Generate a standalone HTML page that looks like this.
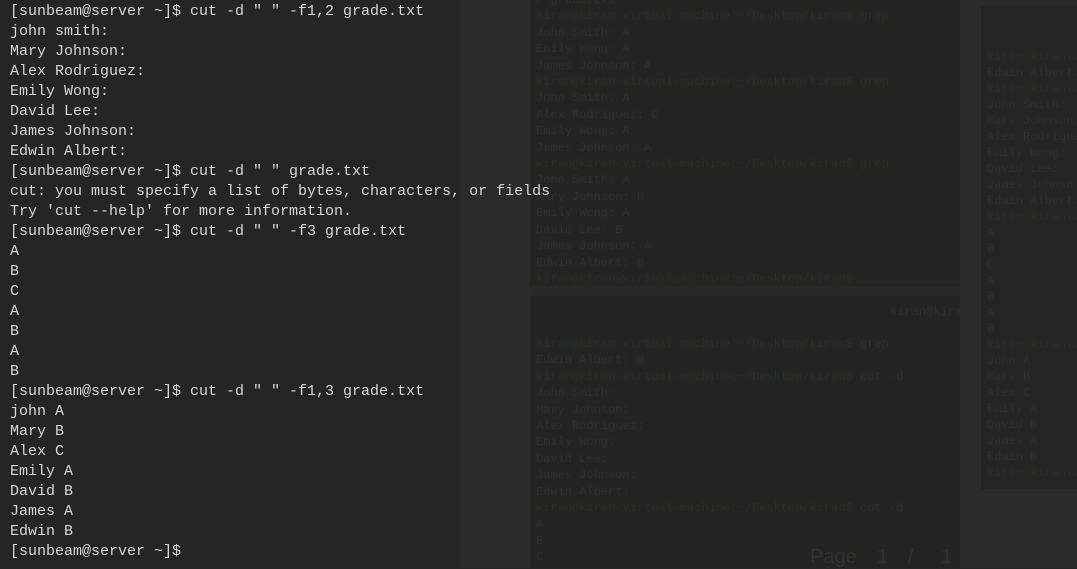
<!DOCTYPE html>
<html><head><style>
html,body{margin:0;padding:0;width:1077px;height:568px;overflow:hidden;background:#252525;}
.bg{position:absolute;top:0;bottom:0}
pre{margin:0;font-family:"Liberation Mono",monospace;font-size:15px;line-height:20px;white-space:pre;}
#t{position:absolute;left:10px;top:2px;color:#d6d6d6;z-index:5}
.f{position:absolute;color:#2d2f2a;font-size:12px;line-height:16.4px;z-index:2}
.k{color:#263024}
</style></head><body>
<div class="bg" style="left:0;width:460px;background:#252525"></div>
<div class="bg" style="left:460px;width:70px;background:#2b2b29"></div>
<div class="bg" style="left:530px;width:430px;background:#242520"></div>
<div class="bg" style="left:960px;width:117px;background:#2b2c28"></div>
<div style="position:absolute;left:981px;top:6px;width:96px;height:483px;background:#252621"></div>
<div style="position:absolute;left:530px;top:286px;width:430px;height:10px;background:#282925"></div>
<pre class="f" style="left:536px;top:-8px">/ grade.txt
<span class="k">kiran@kiran-virtual-machine:~/Desktop/kiran$ grep</span>
John Smith: A
Emily Wong: A
James Johnson: A
<span class="k">kiran@kiran-virtual-machine:~/Desktop/kiran$ grep</span>
John Smith: A
Alex Rodriguez: C
Emily Wong: A
James Johnson: A
<span class="k">kiran@kiran-virtual-machine:~/Desktop/kiran$ grep</span>
John Smith: A
Mary Johnson: B
Emily Wong: A
David Lee: B
James Johnson: A
Edwin Albert: B
<span class="k">kiran@kiran-virtual-machine:~/Desktop/kiran$</span></pre>
<pre class="f" style="left:890px;top:304px">kiran@kiran-</pre>
<pre class="f" style="left:536px;top:336px"><span class="k">kiran@kiran-virtual-machine:~/Desktop/kiran</span>$ grep
Edwin Albert: B
<span class="k">kiran@kiran-virtual-machine:~/Desktop/kiran</span>$ cut -d
John Smith:
Mary Johnson:
Alex Rodriguez:
Emily Wong:
David Lee:
James Johnson:
Edwin Albert:
<span class="k">kiran@kiran-virtual-machine:~/Desktop/kiran</span>$ cut -d
A
B
C</pre>
<pre class="f" style="left:987px;top:49px;line-height:16px"><span class="k">kiran@kiran-v</span>
Edwin Albert:
<span class="k">kiran@kiran-v</span>
John Smith:
Mary Johnson:
Alex Rodrigue
Emily Wong:
David Lee:
James Johnson
Edwin Albert:
<span class="k">kiran@kiran-v</span>
A
B
C
A
B
A
B
<span class="k">kiran@kiran-v</span>
John A
Mary B
Alex C
Emily A
David B
James A
Edwin B
<span class="k">kiran@kiran-v</span></pre>
<div style="position:absolute;z-index:4;left:810px;top:546px;color:#30322c;font:20px 'Liberation Sans',sans-serif;white-space:nowrap">Page<span style="position:absolute;left:67px">1</span><span style="position:absolute;left:98px">/</span><span style="position:absolute;left:131px">1</span></div>
<pre id="t">[sunbeam@server ~]$ cut -d " " -f1,2 grade.txt
john smith:
Mary Johnson:
Alex Rodriguez:
Emily Wong:
David Lee:
James Johnson:
Edwin Albert:
[sunbeam@server ~]$ cut -d " " grade.txt
cut: you must specify a list of bytes, characters, or fields
Try 'cut --help' for more information.
[sunbeam@server ~]$ cut -d " " -f3 grade.txt
A
B
C
A
B
A
B
[sunbeam@server ~]$ cut -d " " -f1,3 grade.txt
john A
Mary B
Alex C
Emily A
David B
James A
Edwin B
[sunbeam@server ~]$</pre>
</body></html>
